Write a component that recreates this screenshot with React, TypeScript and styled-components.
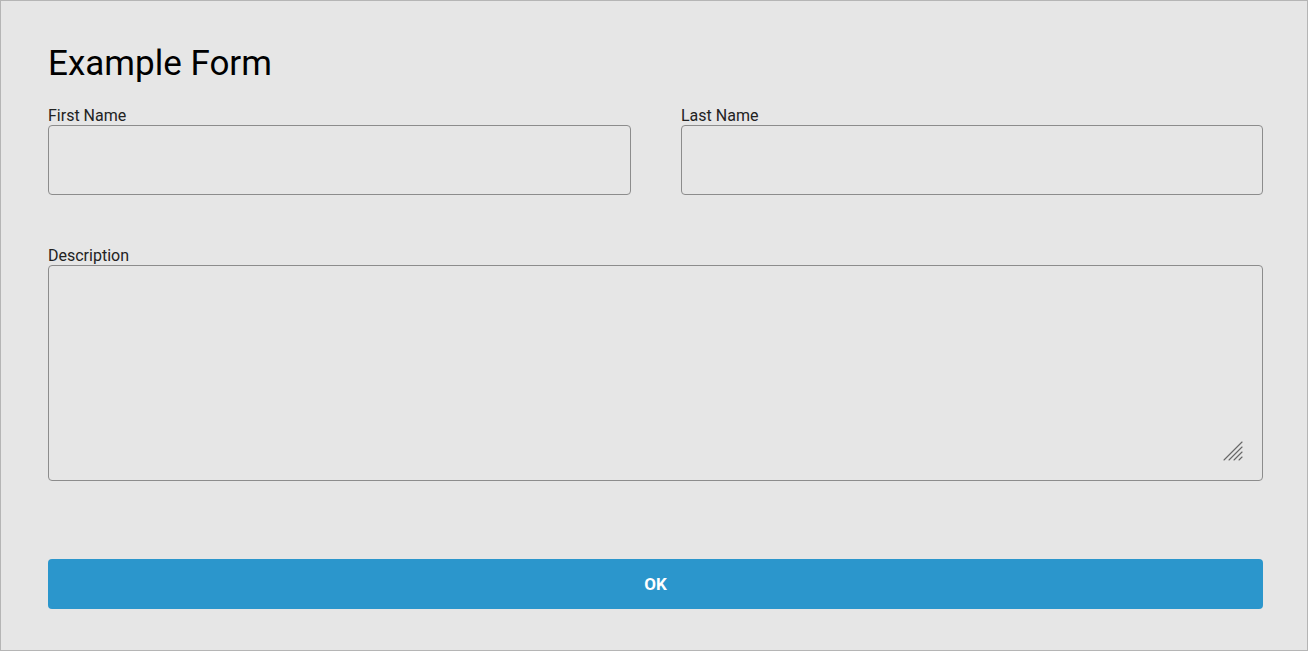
import { createGlobalStyle, styled } from "styled-components";

const GlobalStyle = createGlobalStyle`
  html, body {
    margin: 0;
    padding: 0;
    background: #e6e6e6;
  }
  * {
    box-sizing: border-box;
  }
`;

const Page = styled.div`
  width: 1308px;
  height: 651px;
  border: 1px solid #b5b5b5;
  background: #e6e6e6;
  padding: 0 44px 0 47px;
  font-family: Roboto, "Liberation Sans", sans-serif;
  color: #1f1f1f;
`;

const Title = styled.h1`
  margin: 43px 0 22px;
  font-size: 35px;
  font-weight: 400;
  line-height: 40px;
  color: #000;
`;

const Row = styled.div`
  display: grid;
  grid-template-columns: 583px 582px;
  column-gap: 50px;
`;

const Field = styled.label`
  display: flex;
  flex-direction: column;
`;

const LabelText = styled.span`
  font-size: 16px;
  line-height: 19px;
  color: #222;
`;

const TextInput = styled.input`
  height: 70px;
  width: 100%;
  border: 1px solid #8c8c8c;
  border-radius: 4px;
  background: transparent;
  font: inherit;
  padding: 0 12px;
  outline: none;
`;

const DescriptionField = styled(Field)`
  margin-top: 51px;
`;

const AreaWrap = styled.div`
  position: relative;
  height: 216px;
`;

const TextArea = styled.textarea`
  display: block;
  height: 100%;
  width: 100%;
  border: 1px solid #8c8c8c;
  border-radius: 4px;
  background: transparent;
  font: inherit;
  padding: 12px;
  outline: none;
  resize: none;
`;

const Grip = styled.svg`
  position: absolute;
  right: 20px;
  bottom: 20px;
  width: 20px;
  height: 20px;
  pointer-events: none;
`;

const SubmitButton = styled.button`
  margin-top: 78px;
  width: 1215px;
  height: 50px;
  border: none;
  border-radius: 4px;
  background: #2b96cc;
  color: #fff;
  font-family: Roboto, "Liberation Sans", sans-serif;
  font-size: 17px;
  font-weight: 700;
  cursor: pointer;
`;

const ResizeGrip = () => (
  <Grip viewBox="0 0 20 20">
    <g stroke="#666" strokeWidth="1.1" strokeLinecap="round" fill="none">
      <line x1="1" y1="19" x2="19" y2="1" />
      <line x1="6" y1="19" x2="19" y2="6" />
      <line x1="11" y1="19" x2="19" y2="11" />
      <line x1="16" y1="19" x2="19" y2="16" />
    </g>
  </Grip>
);

export default function App() {
  return (
    <>
      <GlobalStyle />
      <Page>
        <Title>Example Form</Title>
        <Row>
          <Field>
            <LabelText>First Name</LabelText>
            <TextInput type="text" />
          </Field>
          <Field>
            <LabelText>Last Name</LabelText>
            <TextInput type="text" />
          </Field>
        </Row>
        <DescriptionField>
          <LabelText>Description</LabelText>
          <AreaWrap>
            <TextArea />
            <ResizeGrip />
          </AreaWrap>
        </DescriptionField>
        <SubmitButton type="button">OK</SubmitButton>
      </Page>
    </>
  );
}
